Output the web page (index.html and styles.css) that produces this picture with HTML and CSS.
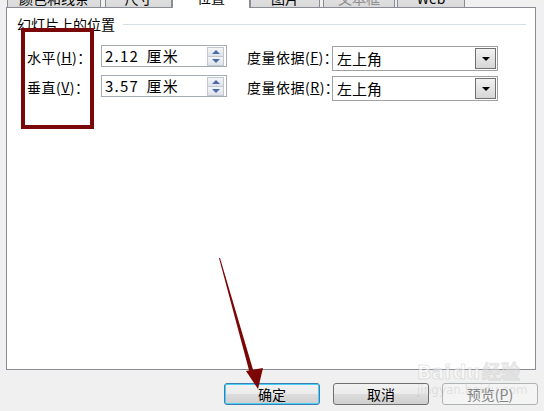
FILE: index.html
```html
<!DOCTYPE html>
<html lang="zh-CN">
<head>
    <meta charset="UTF-8">
    <meta name="viewport" content="width=device-width, initial-scale=1.0">
    <title>设置图片格式 - 位置</title>
    <link rel="stylesheet" href="styles.css">
</head>
<body>

    <!-- Tab strip (tops cut off by the screenshot) -->
    <div class="tabs">
        <div class="tab tab-color">颜色和线条</div>
        <div class="tab tab-size">尺寸</div>
        <div class="tab tab-pos selected">位置</div>
        <div class="tab tab-pic">图片</div>
        <div class="tab tab-text disabled">文本框</div>
        <div class="tab tab-web">Web</div>
    </div>

    <!-- Position page -->
    <div class="panel">
        <div class="group-title"><span>幻灯片上的位置</span></div>

        <div class="fields">
            <label class="label">水平(<u>H</u>)：</label>
            <div class="spin">
                <span class="spin-value">2.12 厘米</span>
                <span class="spin-btns"><i class="up"></i><i class="down"></i></span>
            </div>
            <label class="label">度量依据(<u>F</u>)：</label>
            <div class="combo">
                <span class="combo-value">左上角</span>
                <span class="combo-btn"><i></i></span>
            </div>

            <label class="label">垂直(<u>V</u>)：</label>
            <div class="spin">
                <span class="spin-value">3.57 厘米</span>
                <span class="spin-btns"><i class="up"></i><i class="down"></i></span>
            </div>
            <label class="label">度量依据(<u>R</u>)：</label>
            <div class="combo">
                <span class="combo-value">左上角</span>
                <span class="combo-btn"><i></i></span>
            </div>
        </div>

        <!-- annotation box around the labels -->
        <div class="mark-box"></div>
    </div>

    <!-- Dialog buttons -->
    <div class="buttons">
        <button class="btn focus">确定</button>
        <button class="btn">取消</button>
        <button class="btn" disabled>预览(<u>P</u>)</button>
    </div>

    <!-- watermark -->
    <div class="watermark">
        <div class="wm-logo">Bai<span class="wm-du">du</span>经验</div>
        <div class="wm-url">jingyan.baidu.com</div>
    </div>

    <!-- annotation arrow pointing at OK -->
    <svg class="arrow" width="544" height="411" viewBox="0 0 544 411">
        <polygon points="219,258 220,258 254,373 250,374" fill="#7a0606"/>
        <polygon points="246,371 263,368 258,389" fill="#7a0606"/>
    </svg>

</body>
</html>
```

FILE: styles.css
```css
body {
    margin: 0;
    width: 544px;
    height: 411px;
    overflow: hidden;
    position: relative;
    background: #f0f0f0;
    font-family: "Noto Sans CJK SC", "DejaVu Sans", sans-serif;
    font-size: 14px;
    color: #000;
}

/* tabs */
.tabs {
    display: flex;
    align-items: flex-end;
    height: 21px;
    margin-top: -14px;
    padding-left: 7px;
    position: relative;
    z-index: 2;
}
.tab {
    height: 20px;
    line-height: 21px;
    text-align: center;
    border: 1px solid #898c95;
    border-bottom: none;
    background: linear-gradient(#eaeaea, #d9d9d9);
    box-sizing: border-box;
    margin-right: 3px;
}
.tab-color { width: 94px; margin-right: 4px; }
.tab-size { width: 67px; margin-right: 0; }
.tab-pos { width: 78px; margin-right: 0; }
.tab-pic { width: 70px; }
.tab-text { width: 72px; margin-right: 2px; }
.tab-web { width: 68px; }
.tab.selected {
    height: 22px;
    background: #fff;
    margin-bottom: -1px;
}
.tab.disabled {
    color: #8d8d8d;
}

/* panel */
.panel {
    position: relative;
    margin-left: 6px;
    width: 530px;
    height: 363px;
    box-sizing: border-box;
    border: 1px solid #898c95;
    background: #fff;
    z-index: 1;
}
.group-title {
    display: flex;
    align-items: center;
    margin: 8px 9px 0 10px;
    height: 16px;
    line-height: 16px;
}
.group-title::after {
    content: "";
    flex: 1;
    height: 1px;
    background: #d5dfe5;
    margin-left: 8px;
}

.fields {
    display: grid;
    grid-template-columns: 74px 126px 105px 166px;
    row-gap: 4px;
    margin: 13px 0 0 20px;
}
.label {
    height: 25px;
    line-height: 25px;
    white-space: nowrap;
    letter-spacing: 0.5px;
}
.fields .label:nth-of-type(2),
.fields .label:nth-of-type(4) {
    padding-left: 20px;
}
.label u {
    text-underline-offset: 1px;
}

/* spin box */
.spin {
    display: flex;
    align-items: center;
    justify-content: space-between;
    height: 22px;
    box-sizing: border-box;
    border: 1px solid #a5acb5;
    padding: 0 2px 0 3px;
}
.spin-value {
    line-height: 20px;
    font-size: 15px;
    letter-spacing: 1.2px;
    word-spacing: 3px;
}
.spin-btns {
    display: flex;
    flex-direction: column;
    width: 17px;
    height: 19px;
}
.spin-btns i {
    flex: 1;
    display: flex;
    align-items: center;
    justify-content: center;
    border: 1px solid #c3c8d0;
    background: linear-gradient(#f4f6f9, #dde2ea);
}
.spin-btns i + i {
    border-top: none;
}
.spin-btns i::before {
    content: "";
    border-left: 4px solid transparent;
    border-right: 4px solid transparent;
}
.spin-btns .up::before {
    border-bottom: 4px solid #4d6aa8;
}
.spin-btns .down::before {
    border-top: 4px solid #4d6aa8;
}

/* combo box */
.combo {
    display: flex;
    align-items: center;
    justify-content: space-between;
    height: 25px;
    margin-top: 1px;
    box-sizing: border-box;
    border: 1px solid #a0a0a0;
    padding: 0 1px 0 4px;
}
.combo-value {
    font-size: 15px;
}
.combo-btn {
    display: flex;
    align-items: center;
    justify-content: center;
    width: 21px;
    height: 21px;
    box-sizing: border-box;
    border: 1px solid #707070;
    background: linear-gradient(#f2f2f2, #d6d6d6);
}
.combo-btn i {
    border-left: 4px solid transparent;
    border-right: 4px solid transparent;
    border-top: 4px solid #000;
}

/* annotation box */
.mark-box {
    position: absolute;
    left: 14px;
    top: 20px;
    width: 73px;
    height: 101px;
    box-sizing: border-box;
    border: 4px solid #7a0808;
}

/* buttons */
.buttons {
    display: flex;
    justify-content: flex-end;
    gap: 13px;
    margin-top: 13px;
    padding-right: 6px;
}
.btn {
    width: 96px;
    height: 22px;
    padding: 0;
    font-family: inherit;
    font-size: 14px;
    line-height: 18px;
    color: #000;
    border: 1px solid #707070;
    border-radius: 3px;
    background: linear-gradient(#f2f2f2 0%, #ebebeb 50%, #dddddd 51%, #cfcfcf 100%);
}
.btn.focus {
    border-color: #3c7fb1;
    box-shadow: inset 0 0 0 1px #48d0f8;
}
.btn:disabled {
    color: #838383;
    border-color: #adb2b5;
    background: #f4f4f4;
}

/* watermark */
.watermark {
    position: absolute;
    left: 417px;
    top: 362px;
    z-index: 3;
    color: rgba(255, 255, 255, 0.5);
    pointer-events: none;
}
.wm-logo {
    font-family: "DejaVu Sans", sans-serif;
    font-weight: bold;
    font-size: 19px;
    line-height: 20px;
    -webkit-text-stroke: 1px rgba(170, 170, 170, 0.3);
}
.wm-du {
    margin: 0 2px;
}
.wm-url {
    font-family: "DejaVu Sans", sans-serif;
    font-size: 12px;
    line-height: 16px;
    color: rgba(160, 160, 160, 0.25);
}

/* arrow */
.arrow {
    position: absolute;
    left: 0;
    top: 0;
    z-index: 4;
    pointer-events: none;
}
```
